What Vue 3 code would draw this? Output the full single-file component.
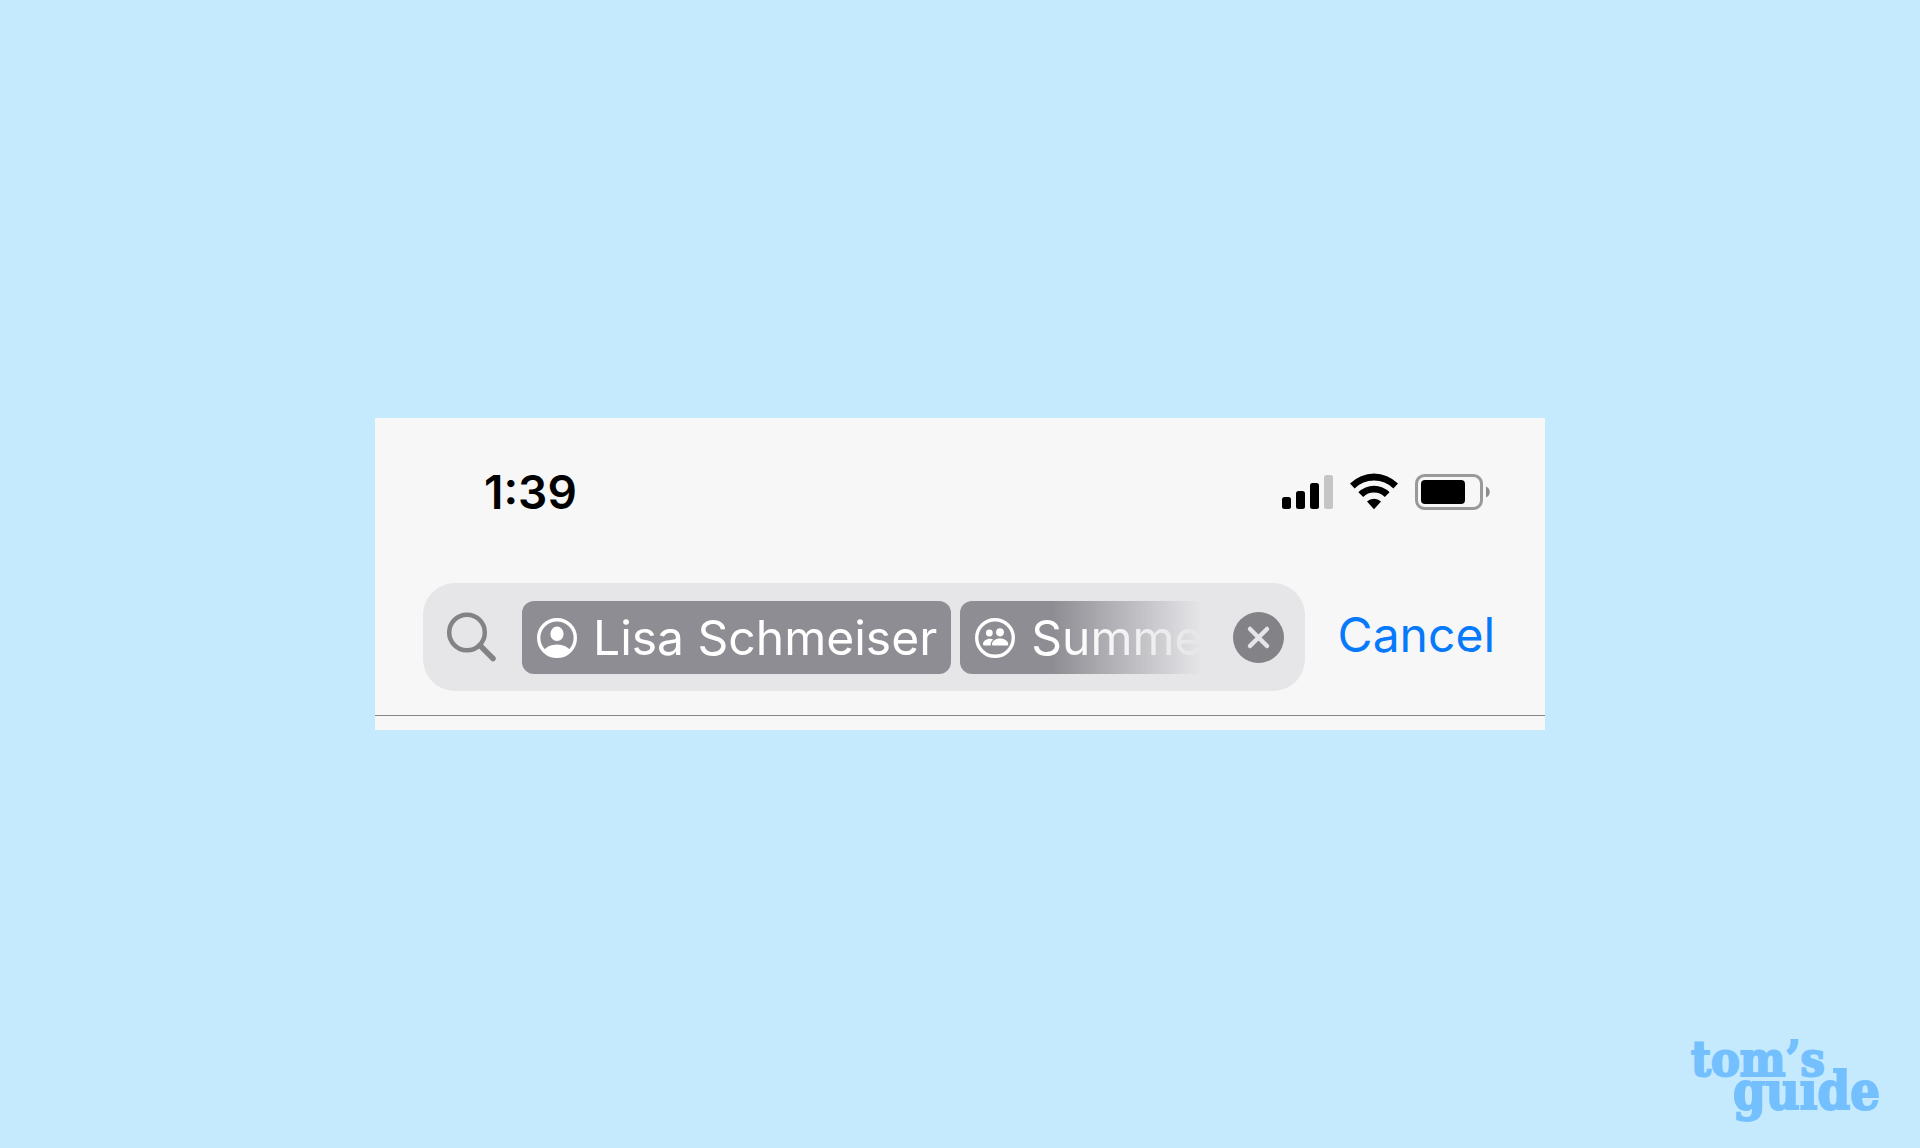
<script setup>
import { ref } from 'vue'

const time = ref('1:39')
const tokens = ref([
  { id: 1, icon: 'person', label: 'Lisa Schmeiser' },
  { id: 2, icon: 'group', label: 'Summe' },
])

const clearTokens = () => {
  tokens.value = []
}
</script>

<template>
  <main class="page">
    <section class="phone">
      <header class="status">
        <time class="clock">{{ time }}</time>
        <div class="indicators">
          <svg class="signal" viewBox="0 0 51 36" aria-hidden="true">
            <rect x="0" y="23" width="9" height="12" rx="2.5" />
            <rect x="14" y="17" width="9" height="18" rx="2.5" />
            <rect x="28" y="9" width="9" height="26" rx="2.5" />
            <rect class="off" x="42" y="1" width="9" height="34" rx="2.5" />
          </svg>
          <svg class="wifi" viewBox="0 0 48 36" aria-hidden="true">
            <path d="M0 9.5A34 34 0 0 1 48 9.5L43.4 14.4A27.5 27.5 0 0 0 4.6 14.4Z" />
            <path d="M8.4 18.2A22 22 0 0 1 39.6 18.2L34.8 23A15.5 15.5 0 0 0 13.2 23Z" />
            <path d="M17 27.6A10 10 0 0 1 31 27.6L24 35.2Z" />
          </svg>
          <svg class="battery" viewBox="0 0 76 36" aria-hidden="true">
            <rect class="shell" x="1.5" y="1.5" width="65" height="33" rx="8" />
            <rect x="6" y="6" width="44" height="24" rx="4" />
            <path class="nub" d="M71 12.5C76 14.5 76 21.5 71 23.5Z" />
          </svg>
        </div>
      </header>

      <div class="toolbar">
        <div class="search" role="search">
          <svg class="glass" viewBox="0 0 50 50" aria-hidden="true">
            <circle cx="20" cy="19.5" r="17.8" />
            <path d="M33 32.5L46 45.5" />
          </svg>
          <div class="tokens">
            <button v-for="token in tokens" :key="token.id" class="token" type="button">
              <svg v-if="token.icon === 'person'" class="badge" viewBox="0 0 40 40" aria-hidden="true">
                <circle class="ring" cx="20" cy="20" r="18.3" />
                <ellipse cx="20" cy="15.8" rx="6.6" ry="7.3" />
                <path d="M6.5 32.5C9.5 28.5 14 26.5 20 26.5S30.5 28.5 33.5 32.5C30 36.5 25 38.5 20 38.5S10 36.5 6.5 32.5Z" />
              </svg>
              <svg v-else class="badge" viewBox="0 0 40 40" aria-hidden="true">
                <circle class="ring" cx="20" cy="20" r="18.3" />
                <circle cx="14.3" cy="15" r="3.4" />
                <ellipse cx="25" cy="14.3" rx="3.9" ry="4.1" />
                <path d="M18.3 21.7C14.5 19 8 22 8 26C8 27.2 8.7 27.6 9.5 27.6H15.8C15.3 25 16.3 23 18.3 21.7Z" />
                <path d="M25 20.6C20.5 20.6 17 23.2 17 26.2C17 27.2 17.6 27.6 18.4 27.6H31.8C32.7 27.6 33.2 27.2 33.2 26.2C33.2 23.2 29.7 20.6 25 20.6Z" />
              </svg>
              <span>{{ token.label }}</span>
            </button>
          </div>
          <button class="clear" type="button" aria-label="Clear search" @click="clearTokens">
            <svg viewBox="0 0 51 51" aria-hidden="true">
              <path d="M17 17L34 34M34 17L17 34" />
            </svg>
          </button>
        </div>
        <button class="cancel" type="button" @click="clearTokens">Cancel</button>
      </div>
    </section>

    <footer class="brand">
      <span class="first">tom’s</span>
      <span class="second">guıde</span>
    </footer>
  </main>
</template>

<style>
body {
  background: #c5eafe;
}
</style>

<style scoped>
.page {
  box-sizing: border-box;
  min-height: 100vh;
  display: grid;
  grid-template-rows: 1fr auto 1fr;
  justify-items: center;
  background: #c5eafe;
  font-family: Inter, "Liberation Sans", sans-serif;
}
button {
  border: 0;
  padding: 0;
  font: inherit;
  cursor: pointer;
}
svg {
  display: block;
  overflow: visible;
}
.phone {
  grid-row: 2;
  box-sizing: border-box;
  width: 100%;
  max-width: 1170px;
  padding-bottom: 14px;
  background: #f7f7f7;
}
.status {
  display: flex;
  align-items: center;
  justify-content: space-between;
  padding: 46px 54px 0 109px;
}
.clock {
  font-size: 46px;
  line-height: 56px;
  font-weight: 600;
  color: #000;
}
.indicators {
  display: flex;
  gap: 17px;
}
.signal {
  width: 51px;
  height: 36px;
}
.off {
  fill: #c5c5c5;
}
.wifi {
  width: 48px;
  height: 36px;
}
.battery {
  width: 76px;
  height: 36px;
}
.shell {
  fill: none;
  stroke: #999;
  stroke-width: 3;
}
.nub {
  fill: #8c8c8c;
}
.toolbar {
  display: flex;
  align-items: center;
  gap: 33px;
  padding: 63px 50px 24px 48px;
  border-bottom: 1px solid #86858a;
}
.search {
  flex: 1;
  min-width: 0;
  box-sizing: border-box;
  display: flex;
  align-items: center;
  padding: 18px 21px 17px 24px;
  border-radius: 32px;
  background: #e6e6e9;
}
.glass {
  flex: none;
  width: 50px;
  height: 50px;
  margin-right: 25px;
  fill: none;
  stroke: #838287;
  stroke-width: 4.5;
}
.glass path {
  stroke-width: 5.5;
  stroke-linecap: round;
}
.tokens {
  flex: 1;
  min-width: 0;
  display: flex;
  gap: 9px;
  overflow: hidden;
  mask-image: linear-gradient(to right, #000 calc(100% - 180px), transparent calc(100% - 32px));
}
.token {
  flex: none;
  display: flex;
  align-items: center;
  gap: 16px;
  padding: 7px 14px 6px 15px;
  border-radius: 12px;
  background: #8e8d93;
  color: #fff;
  font-size: 48px;
  line-height: 60px;
}
.badge {
  width: 40px;
  height: 40px;
  fill: #fff;
}
.ring {
  fill: none;
  stroke: #fff;
  stroke-width: 3.4;
}
.clear {
  flex: none;
  width: 51px;
  height: 51px;
  border-radius: 50%;
  background: #838287;
}
.clear svg {
  fill: none;
  stroke: #e6e6e9;
  stroke-width: 4.5;
  stroke-linecap: round;
}
.cancel {
  flex: none;
  padding-bottom: 4px;
  background: none;
  color: #067afb;
  font-size: 48px;
  line-height: 60px;
}
.brand {
  grid-row: 3;
  justify-self: end;
  align-self: end;
  display: flex;
  flex-direction: column;
  padding: 0 40px 41px 0;
  color: #74c0ff;
  font-family: "DejaVu Serif Condensed", "DejaVu Serif", serif;
  line-height: 32px;
  font-weight: 700;
  -webkit-text-stroke: 2px #74c0ff;
}
.first {
  font-size: 48px;
}
.second {
  padding-left: 42px;
  font-size: 52px;
}
</style>
